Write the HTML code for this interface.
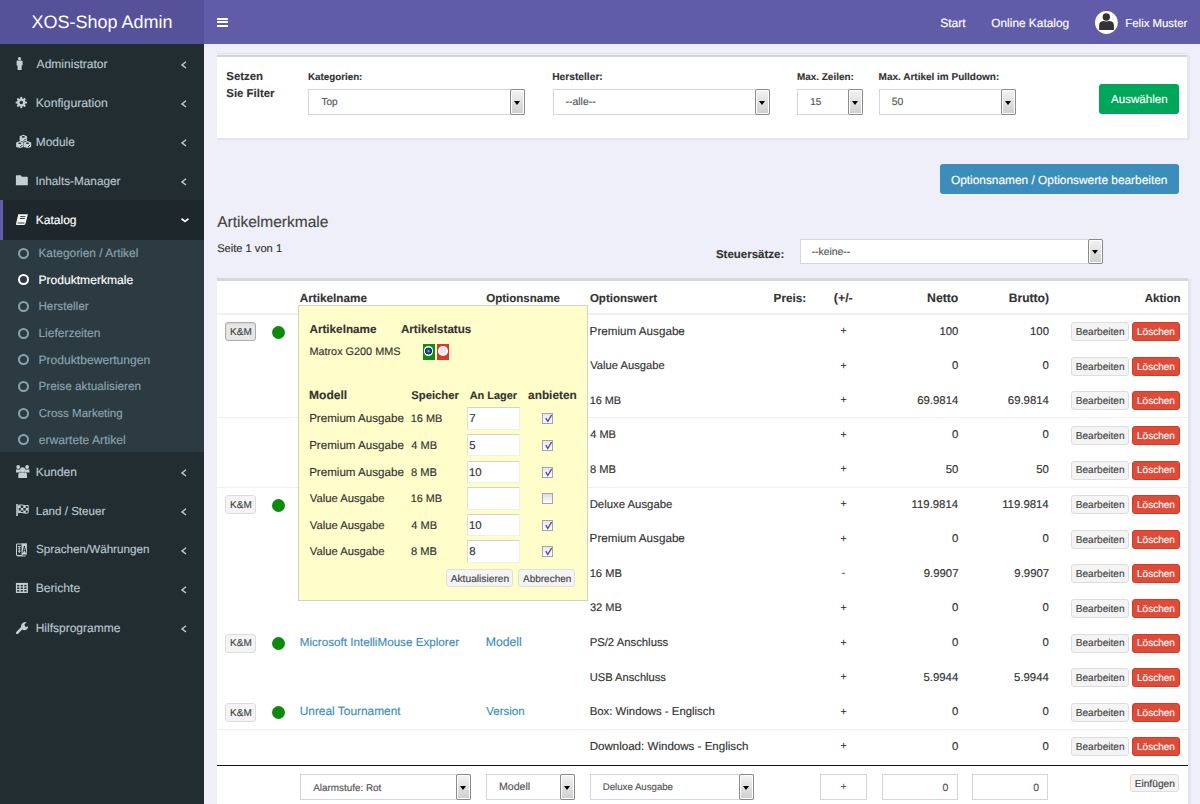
<!DOCTYPE html>
<html><head><meta charset="utf-8"><title>XOS-Shop Admin</title>
<style>
html,body{margin:0;padding:0;width:1200px;height:804px;overflow:hidden;}
body{position:relative;font-family:"Liberation Sans",sans-serif;text-rendering:geometricPrecision;}
.t{position:absolute;white-space:nowrap;-webkit-text-stroke:0.15px currentColor;}
.b{position:absolute;}
</style></head><body>
<div class="b" style="left:0px;top:0px;width:1200px;height:804px;background:#eeeff8;"></div>
<div class="b" style="left:0px;top:0px;width:204px;height:44px;background:#555299;"></div>
<div class="t" style="left:31.55px;top:13.00px;font-size:18.013px;line-height:18.013px;color:#fff;-webkit-text-stroke:0;">XOS-Shop Admin</div>
<div class="b" style="left:204px;top:0px;width:996px;height:44px;background:#605ca8;"></div>
<div class="b" style="left:217px;top:17.6px;width:11px;height:2.1999999999999993px;background:#fff;border-radius:0.5px;"></div>
<div class="b" style="left:217px;top:21px;width:11px;height:2.1999999999999993px;background:#fff;border-radius:0.5px;"></div>
<div class="b" style="left:217px;top:24.8px;width:11px;height:2.1999999999999993px;background:#fff;border-radius:0.5px;"></div>
<div class="t" style="left:940.20px;top:17.00px;font-size:12.049px;line-height:12.049px;color:#fff;">Start</div>
<div class="t" style="left:991.31px;top:18.00px;font-size:11.860px;line-height:11.860px;color:#fff;">Online Katalog</div>
<div class="t" style="left:1125.34px;top:19.00px;font-size:11.402px;line-height:11.402px;color:#fff;">Felix Muster</div>
<svg class="b" style="left:1095px;top:11px" width="23" height="23" viewBox="0 0 23 23"><circle cx="11.4" cy="11.5" r="11.4" fill="#fff"/><path d="M4.1 18.4 L4.1 14.6 Q4.1 10.4 8.3 10.1 L14.6 10.1 Q18.9 10.4 18.9 14.6 L18.9 18.4 Q18.9 19 18.3 19 L4.7 19 Q4.1 19 4.1 18.4 Z" fill="#333"/><circle cx="11.3" cy="6" r="4.6" fill="#fff"/><circle cx="11.3" cy="6" r="3.7" fill="#333"/></svg>
<div class="b" style="left:0px;top:44px;width:204px;height:760px;background:#222d32;"></div>
<div class="b" style="left:0px;top:200px;width:204px;height:40px;background:#1e282c;"></div>
<div class="b" style="left:0px;top:200px;width:3px;height:40px;background:#605ca8;"></div>
<div class="b" style="left:0px;top:240px;width:204px;height:212px;background:#2c3b41;"></div>
<div class="t" style="left:36.60px;top:58.00px;font-size:12.051px;line-height:12.051px;color:#b8c7ce;">Administrator</div>
<svg class="b" style="left:180px;top:58.5px" width="8" height="10" viewBox="0 0 8 10"><path d="M6 2.75 L2 5.9 L6 9" stroke="#b8c7ce" stroke-width="1.5" fill="none"/></svg>
<div class="t" style="left:35.68px;top:97.00px;font-size:12.261px;line-height:12.261px;color:#b8c7ce;">Konfiguration</div>
<svg class="b" style="left:180px;top:97.5px" width="8" height="10" viewBox="0 0 8 10"><path d="M6 2.75 L2 5.9 L6 9" stroke="#b8c7ce" stroke-width="1.5" fill="none"/></svg>
<div class="t" style="left:35.70px;top:137.00px;font-size:11.969px;line-height:11.969px;color:#b8c7ce;">Module</div>
<svg class="b" style="left:180px;top:136.5px" width="8" height="10" viewBox="0 0 8 10"><path d="M6 2.75 L2 5.9 L6 9" stroke="#b8c7ce" stroke-width="1.5" fill="none"/></svg>
<div class="t" style="left:35.42px;top:176.00px;font-size:11.789px;line-height:11.789px;color:#b8c7ce;">Inhalts-Manager</div>
<svg class="b" style="left:180px;top:175.5px" width="8" height="10" viewBox="0 0 8 10"><path d="M6 2.75 L2 5.9 L6 9" stroke="#b8c7ce" stroke-width="1.5" fill="none"/></svg>
<div class="t" style="left:35.70px;top:214.00px;font-size:12.062px;line-height:12.062px;color:#fff;">Katalog</div>
<svg class="b" style="left:180px;top:215.5px" width="10" height="8" viewBox="0 0 10 8"><path d="M1.5 2.75 L5 5.5 L8.5 2.75" stroke="#fff" stroke-width="1.6" fill="none"/></svg>
<div class="t" style="left:35.70px;top:467.00px;font-size:11.939px;line-height:11.939px;color:#b8c7ce;">Kunden</div>
<svg class="b" style="left:180px;top:466.5px" width="8" height="10" viewBox="0 0 8 10"><path d="M6 2.75 L2 5.9 L6 9" stroke="#b8c7ce" stroke-width="1.5" fill="none"/></svg>
<div class="t" style="left:35.73px;top:507.00px;font-size:11.593px;line-height:11.593px;color:#b8c7ce;">Land / Steuer</div>
<svg class="b" style="left:180px;top:505.5px" width="8" height="10" viewBox="0 0 8 10"><path d="M6 2.75 L2 5.9 L6 9" stroke="#b8c7ce" stroke-width="1.5" fill="none"/></svg>
<div class="t" style="left:36.02px;top:544.00px;font-size:11.668px;line-height:11.668px;color:#b8c7ce;">Sprachen/Währungen</div>
<svg class="b" style="left:180px;top:544.5px" width="8" height="10" viewBox="0 0 8 10"><path d="M6 2.75 L2 5.9 L6 9" stroke="#b8c7ce" stroke-width="1.5" fill="none"/></svg>
<div class="t" style="left:35.69px;top:582.00px;font-size:12.141px;line-height:12.141px;color:#b8c7ce;">Berichte</div>
<svg class="b" style="left:180px;top:583.5px" width="8" height="10" viewBox="0 0 8 10"><path d="M6 2.75 L2 5.9 L6 9" stroke="#b8c7ce" stroke-width="1.5" fill="none"/></svg>
<div class="t" style="left:35.70px;top:622.00px;font-size:12.014px;line-height:12.014px;color:#b8c7ce;">Hilfsprogramme</div>
<svg class="b" style="left:180px;top:622.5px" width="8" height="10" viewBox="0 0 8 10"><path d="M6 2.75 L2 5.9 L6 9" stroke="#b8c7ce" stroke-width="1.5" fill="none"/></svg>
<div class="t" style="left:38.41px;top:248.00px;font-size:11.927px;line-height:11.927px;color:#8aa4af;">Kategorien / Artikel</div>
<div class="b" style="left:18.3px;top:247.60px;width:7px;height:7px;border:2px solid #8aa4af;border-radius:50%"></div>
<div class="t" style="left:38.39px;top:274.00px;font-size:12.129px;line-height:12.129px;color:#fff;">Produktmerkmale</div>
<div class="b" style="left:18.3px;top:274.25px;width:7px;height:7px;border:2px solid #fff;border-radius:50%"></div>
<div class="t" style="left:38.42px;top:301.00px;font-size:11.737px;line-height:11.737px;color:#8aa4af;">Hersteller</div>
<div class="b" style="left:18.3px;top:300.90px;width:7px;height:7px;border:2px solid #8aa4af;border-radius:50%"></div>
<div class="t" style="left:38.40px;top:327.00px;font-size:12.000px;line-height:12.000px;color:#8aa4af;">Lieferzeiten</div>
<div class="b" style="left:18.3px;top:327.55px;width:7px;height:7px;border:2px solid #8aa4af;border-radius:50%"></div>
<div class="t" style="left:38.39px;top:354.00px;font-size:12.143px;line-height:12.143px;color:#8aa4af;">Produktbewertungen</div>
<div class="b" style="left:18.3px;top:354.20px;width:7px;height:7px;border:2px solid #8aa4af;border-radius:50%"></div>
<div class="t" style="left:38.42px;top:381.00px;font-size:11.778px;line-height:11.778px;color:#8aa4af;">Preise aktualisieren</div>
<div class="b" style="left:18.3px;top:380.85px;width:7px;height:7px;border:2px solid #8aa4af;border-radius:50%"></div>
<div class="t" style="left:38.72px;top:409.00px;font-size:11.540px;line-height:11.540px;color:#8aa4af;">Cross Marketing</div>
<div class="b" style="left:18.3px;top:407.50px;width:7px;height:7px;border:2px solid #8aa4af;border-radius:50%"></div>
<div class="t" style="left:38.69px;top:434.00px;font-size:12.156px;line-height:12.156px;color:#8aa4af;">erwartete Artikel</div>
<div class="b" style="left:18.3px;top:434.15px;width:7px;height:7px;border:2px solid #8aa4af;border-radius:50%"></div>
<svg class="b" style="left:0;top:0" width="204" height="804" viewBox="0 0 204 804"><circle cx="19.5" cy="58.6" r="1.6" fill="#c3cfd4"/><path d="M16.6 61.2 Q16.6 60.6 17.3 60.6 L21.9 60.6 Q22.6 60.6 22.6 61.2 L22.6 65.4 L21.6 65.4 L21.6 70 L17.6 70 L17.6 65.4 L16.6 65.4 Z" fill="#c3cfd4"/><rect x="20.3" y="96.9" width="2" height="3" fill="#c3cfd4" transform="rotate(0 21.3 102.5)"/><rect x="20.3" y="96.9" width="2" height="3" fill="#c3cfd4" transform="rotate(45 21.3 102.5)"/><rect x="20.3" y="96.9" width="2" height="3" fill="#c3cfd4" transform="rotate(90 21.3 102.5)"/><rect x="20.3" y="96.9" width="2" height="3" fill="#c3cfd4" transform="rotate(135 21.3 102.5)"/><rect x="20.3" y="96.9" width="2" height="3" fill="#c3cfd4" transform="rotate(180 21.3 102.5)"/><rect x="20.3" y="96.9" width="2" height="3" fill="#c3cfd4" transform="rotate(225 21.3 102.5)"/><rect x="20.3" y="96.9" width="2" height="3" fill="#c3cfd4" transform="rotate(270 21.3 102.5)"/><rect x="20.3" y="96.9" width="2" height="3" fill="#c3cfd4" transform="rotate(315 21.3 102.5)"/><circle cx="21.3" cy="102.5" r="4.1" fill="#c3cfd4"/><circle cx="21.3" cy="102.5" r="1.7" fill="#222d32"/><path d="M19.6 136.3 L23.3 134.8 L27.0 136.3 L27.0 140.70000000000002 L23.3 141.8 L19.6 140.70000000000002 Z" fill="#c3cfd4"/><ellipse cx="23.3" cy="136.9" rx="1.6" ry="0.8" fill="#222d32"/><path d="M24.0 140.5 L25.7 138.8" stroke="#222d32" stroke-width="1"/><path d="M16.1 142.6 L19.8 141.1 L23.5 142.6 L23.5 147.0 L19.8 148.1 L16.1 147.0 Z" fill="#c3cfd4"/><ellipse cx="19.8" cy="143.2" rx="1.6" ry="0.8" fill="#222d32"/><path d="M20.5 146.79999999999998 L22.2 145.1" stroke="#222d32" stroke-width="1"/><path d="M23.8 142.6 L27.5 141.1 L31.2 142.6 L31.2 147.0 L27.5 148.1 L23.8 147.0 Z" fill="#c3cfd4"/><ellipse cx="27.5" cy="143.2" rx="1.6" ry="0.8" fill="#222d32"/><path d="M28.2 146.79999999999998 L29.9 145.1" stroke="#222d32" stroke-width="1"/><path d="M15.9 176 Q15.9 175.3 16.6 175.3 L20.8 175.3 L21.8 176.8 L27.1 176.8 Q27.8 176.8 27.8 177.5 L27.8 185.2 L15.9 185.2 Z" fill="#c3cfd4"/><path d="M18.3 214.3 L27.9 214.3 L25.6 223.2 Q25.3 224.9 24 224.9 L16.4 224.9 Q15.9 224.9 16.1 223.6 Z" fill="#f4f6f6"/><path d="M20.2 216.6 L25.3 216.6 M19.8 218.5 L24.8 218.5 M17.6 223 L24.4 223" stroke="#222d32" stroke-width="0.9"/><circle cx="18.2" cy="467" r="1.9" fill="#c3cfd4"/><circle cx="27.1" cy="467" r="1.9" fill="#c3cfd4"/><path d="M16 469.5 L20.5 469.5 L20.5 472.5 L16 472.5 Z M24.7 469.5 L29.4 469.5 L29.4 472.5 L24.7 472.5 Z" fill="#c3cfd4"/><circle cx="22.6" cy="469.8" r="2.6" fill="#c3cfd4"/><path d="M18.3 474.5 Q18.3 472.5 20.3 472.5 L25 472.5 Q27 472.5 27 474.5 L27 477.9 L18.3 477.9 Z" fill="#c3cfd4"/><rect x="16.2" y="504" width="1.6" height="12" fill="#c3cfd4"/><path d="M18.3 505.3 Q20.8 504.3 23.2 505.3 Q25.7 506.3 28.2 505.3 L28.2 512.8 Q25.7 513.8 23.2 512.8 Q20.8 511.8 18.3 512.8 Z" fill="none" stroke="#c3cfd4" stroke-width="1"/><rect x="18.3" y="505.5" width="2.5" height="2.5" fill="#c3cfd4"/><rect x="23.2" y="505.5" width="2.5" height="2.5" fill="#c3cfd4"/><rect x="20.8" y="508" width="2.5" height="2.5" fill="#c3cfd4"/><rect x="25.7" y="508" width="2.5" height="2.5" fill="#c3cfd4"/><rect x="18.3" y="510.5" width="2.5" height="2.5" fill="#c3cfd4"/><rect x="23.2" y="510.5" width="2.5" height="2.5" fill="#c3cfd4"/><path d="M16.5 544 L22.2 544 L22.2 555.4 L16.5 555.4 Z" fill="none" stroke="#c3cfd4" stroke-width="1"/><path d="M17.8 546.5 h3 M18.2 548.8 h2.4 M17.8 551.2 h3 M19.3 546 v7" stroke="#c3cfd4" stroke-width="0.9"/><path d="M21.8 543.3 L26.9 543.3 L26.9 554.6 L21.8 554.6 Z" fill="#c3cfd4"/><path d="M22.9 552.6 L24.4 546 L25.9 552.6 M23.4 550.6 h2" stroke="#222d32" stroke-width="0.9" fill="none"/><path d="M17.3 556 h8.6" stroke="#c3cfd4" stroke-width="0.9"/><rect x="15.9" y="582.9" width="12" height="10.1" fill="#c3cfd4"/><rect x="17.1" y="584.9" width="2.2" height="1.5" fill="#222d32"/><rect x="17.1" y="587.5" width="2.2" height="1.5" fill="#222d32"/><rect x="17.1" y="590.1" width="2.2" height="1.5" fill="#222d32"/><rect x="20.7" y="584.9" width="2.2" height="1.5" fill="#222d32"/><rect x="20.7" y="587.5" width="2.2" height="1.5" fill="#222d32"/><rect x="20.7" y="590.1" width="2.2" height="1.5" fill="#222d32"/><rect x="24.3" y="584.9" width="2.2" height="1.5" fill="#222d32"/><rect x="24.3" y="587.5" width="2.2" height="1.5" fill="#222d32"/><rect x="24.3" y="590.1" width="2.2" height="1.5" fill="#222d32"/><path d="M17.2 632.8 L22.3 627.7" stroke="#c3cfd4" stroke-width="2.6" stroke-linecap="round"/><path d="M21.3 628.6 Q20.2 624.3 23.5 622.6 Q25.2 621.8 26.6 622.2 L24.4 624.4 L25.1 626.5 L27.2 627.1 L28.2 625.8 Q28.3 628.2 26.7 629.4 Q24.7 630.8 22.6 629.8 Z" fill="#c3cfd4"/></svg>
<div class="b" style="left:217px;top:53px;width:971px;height:1px;background:#e4e5ec;"></div>
<div class="b" style="left:1187px;top:55px;width:2.5px;height:84px;background:#e5e6ec;"></div>
<div class="b" style="left:217px;top:137.5px;width:972px;height:2.0px;background:#e5e6ec;"></div>
<div class="b" style="left:217px;top:55px;width:970px;height:83px;background:#fff;border-top:2px solid #d2d4da;box-sizing:border-box;"></div>
<div class="t" style="left:226.31px;top:72.00px;font-size:11.429px;line-height:11.429px;color:#333;font-weight:bold;-webkit-text-stroke:0.12px currentColor;">Setzen</div>
<div class="t" style="left:226.31px;top:89.00px;font-size:11.429px;line-height:11.429px;color:#333;font-weight:bold;-webkit-text-stroke:0.12px currentColor;">Sie Filter</div>
<div class="t" style="left:307.96px;top:73.00px;font-size:9.815px;line-height:9.815px;color:#333;font-weight:bold;-webkit-text-stroke:0.12px currentColor;">Kategorien:</div>
<div class="b" style="left:308px;top:89px;width:217px;height:26px;background:#fff;border:1px solid #d2d6de;box-sizing:border-box;"></div>
<div class="b" style="left:510px;top:89px;width:15px;height:26px;border:1px solid #8a8a8a;border-radius:2px;box-sizing:border-box;background:#fff;"><div style="position:absolute;left:1px;top:1px;right:1px;bottom:1px;background:linear-gradient(#f2f2f2,#d0d0d0)"></div><div style="position:absolute;left:3px;top:10.5px;width:0;height:0;border-left:3.5px solid transparent;border-right:3.5px solid transparent;border-top:4px solid #000"></div></div>
<div class="t" style="left:321.45px;top:98.00px;font-size:10.065px;line-height:10.065px;color:#555;">Top</div>
<div class="t" style="left:552.23px;top:73.00px;font-size:10.220px;line-height:10.220px;color:#333;font-weight:bold;-webkit-text-stroke:0.12px currentColor;">Hersteller:</div>
<div class="b" style="left:552.6px;top:89px;width:217.39999999999998px;height:26px;background:#fff;border:1px solid #d2d6de;box-sizing:border-box;"></div>
<div class="b" style="left:755px;top:89px;width:15px;height:26px;border:1px solid #8a8a8a;border-radius:2px;box-sizing:border-box;background:#fff;"><div style="position:absolute;left:1px;top:1px;right:1px;bottom:1px;background:linear-gradient(#f2f2f2,#d0d0d0)"></div><div style="position:absolute;left:3px;top:10.5px;width:0;height:0;border-left:3.5px solid transparent;border-right:3.5px solid transparent;border-top:4px solid #000"></div></div>
<div class="t" style="left:565.48px;top:98.00px;font-size:10.464px;line-height:10.464px;color:#555;">--alle--</div>
<div class="t" style="left:797.06px;top:73.00px;font-size:9.910px;line-height:9.910px;color:#333;font-weight:bold;-webkit-text-stroke:0.12px currentColor;">Max. Zeilen:</div>
<div class="b" style="left:797px;top:89px;width:66px;height:26px;background:#fff;border:1px solid #d2d6de;box-sizing:border-box;"></div>
<div class="b" style="left:848px;top:89px;width:15px;height:26px;border:1px solid #8a8a8a;border-radius:2px;box-sizing:border-box;background:#fff;"><div style="position:absolute;left:1px;top:1px;right:1px;bottom:1px;background:linear-gradient(#f2f2f2,#d0d0d0)"></div><div style="position:absolute;left:3px;top:10.5px;width:0;height:0;border-left:3.5px solid transparent;border-right:3.5px solid transparent;border-top:4px solid #000"></div></div>
<div class="t" style="left:810.25px;top:98.00px;font-size:10.000px;line-height:10.000px;color:#555;">15</div>
<div class="t" style="left:878.55px;top:73.00px;font-size:10.000px;line-height:10.000px;color:#333;font-weight:bold;-webkit-text-stroke:0.12px currentColor;">Max. Artikel im Pulldown:</div>
<div class="b" style="left:879px;top:89px;width:137px;height:26px;background:#fff;border:1px solid #d2d6de;box-sizing:border-box;"></div>
<div class="b" style="left:1001px;top:89px;width:15px;height:26px;border:1px solid #8a8a8a;border-radius:2px;box-sizing:border-box;background:#fff;"><div style="position:absolute;left:1px;top:1px;right:1px;bottom:1px;background:linear-gradient(#f2f2f2,#d0d0d0)"></div><div style="position:absolute;left:3px;top:10.5px;width:0;height:0;border-left:3.5px solid transparent;border-right:3.5px solid transparent;border-top:4px solid #000"></div></div>
<div class="t" style="left:891.78px;top:98.00px;font-size:10.439px;line-height:10.439px;color:#555;">50</div>
<div class="b" style="left:1099px;top:84px;width:80px;height:30px;background:#00a65a;border-radius:3px;"></div>
<div class="t" style="left:1111.00px;top:94.00px;font-size:11.606px;line-height:11.606px;color:#fff;">Auswählen</div>
<div class="b" style="left:940px;top:164px;width:239px;height:30px;background:#3c8dbc;border-radius:3px;"></div>
<div class="t" style="left:950.91px;top:175.00px;font-size:11.884px;line-height:11.884px;color:#fff;">Optionsnamen / Optionswerte bearbeiten</div>
<div class="t" style="left:217.20px;top:215.00px;font-size:15.523px;line-height:15.523px;color:#444;">Artikelmerkmale</div>
<div class="t" style="left:217.14px;top:244.00px;font-size:11.130px;line-height:11.130px;color:#333;">Seite 1 von 1</div>
<div class="t" style="left:715.91px;top:250.00px;font-size:11.502px;line-height:11.502px;color:#333;font-weight:bold;-webkit-text-stroke:0.12px currentColor;">Steuersätze:</div>
<div class="b" style="left:799.7px;top:238.7px;width:303.29999999999995px;height:25.5px;background:#fff;border:1px solid #d2d6de;box-sizing:border-box;"></div>
<div class="b" style="left:1088px;top:238.7px;width:15px;height:25.5px;border:1px solid #8a8a8a;border-radius:2px;box-sizing:border-box;background:#fff;"><div style="position:absolute;left:1px;top:1px;right:1px;bottom:1px;background:linear-gradient(#f2f2f2,#d0d0d0)"></div><div style="position:absolute;left:3px;top:10.2px;width:0;height:0;border-left:3.5px solid transparent;border-right:3.5px solid transparent;border-top:4px solid #000"></div></div>
<div class="t" style="left:811.68px;top:248.00px;font-size:10.345px;line-height:10.345px;color:#555;">--keine--</div>
<div class="b" style="left:1188px;top:279px;width:2.5px;height:525px;background:#e5e6ec;"></div>
<div class="b" style="left:217px;top:278px;width:971px;height:526px;background:#fff;border-top:3px solid #d2d6de;box-sizing:border-box;"></div>
<div class="t" style="left:299.71px;top:293.00px;font-size:11.762px;line-height:11.762px;color:#333;font-weight:bold;-webkit-text-stroke:0.12px currentColor;">Artikelname</div>
<div class="t" style="left:486.17px;top:294.00px;font-size:11.548px;line-height:11.548px;color:#333;font-weight:bold;-webkit-text-stroke:0.12px currentColor;">Optionsname</div>
<div class="t" style="left:589.92px;top:294.00px;font-size:11.515px;line-height:11.515px;color:#333;font-weight:bold;-webkit-text-stroke:0.12px currentColor;">Optionswert</div>
<div class="t" style="left:773.62px;top:293.00px;font-size:11.731px;line-height:11.731px;color:#333;font-weight:bold;-webkit-text-stroke:0.12px currentColor;">Preis:</div>
<div class="t" style="left:833.78px;top:292.00px;font-size:12.414px;line-height:12.414px;color:#333;font-weight:bold;-webkit-text-stroke:0.12px currentColor;">(+/-</div>
<div class="t" style="left:927.08px;top:292.00px;font-size:12.245px;line-height:12.245px;color:#333;font-weight:bold;-webkit-text-stroke:0.12px currentColor;">Netto</div>
<div class="t" style="left:1008.69px;top:292.00px;font-size:12.125px;line-height:12.125px;color:#333;font-weight:bold;-webkit-text-stroke:0.12px currentColor;">Brutto)</div>
<div class="t" style="left:1144.71px;top:294.00px;font-size:11.570px;line-height:11.570px;color:#333;font-weight:bold;-webkit-text-stroke:0.12px currentColor;">Aktion</div>
<div class="b" style="left:217px;top:313px;width:971px;height:1.5px;background:#f1f1f1;"></div>
<div class="t" style="left:589.62px;top:326.00px;font-size:11.677px;line-height:11.677px;color:#333;">Premium Ausgabe</div>
<div class="t" style="left:840.58px;top:326.00px;font-size:10.500px;line-height:10.500px;color:#333;">+</div>
<div class="t" style="left:939.41px;top:327.00px;font-size:11.376px;line-height:11.376px;color:#333;">100</div>
<div class="t" style="left:1030.01px;top:327.00px;font-size:11.376px;line-height:11.376px;color:#333;">100</div>
<div class="b" style="left:1071px;top:322.2px;width:58px;height:19.0px;background:#f4f4f4;border:1px solid #ddd;border-radius:3px;box-sizing:border-box;"></div>
<div class="t" style="left:1075.74px;top:328.00px;font-size:10.106px;line-height:10.106px;color:#444;">Bearbeiten</div>
<div class="b" style="left:1132px;top:322.2px;width:47.5px;height:19.0px;background:#dd4b39;border:1px solid #d73925;border-radius:3px;box-sizing:border-box;"></div>
<div class="t" style="left:1137.05px;top:328.00px;font-size:10.000px;line-height:10.000px;color:#fff;">Löschen</div>
<div class="t" style="left:590.22px;top:361.00px;font-size:11.197px;line-height:11.197px;color:#333;">Value Ausgabe</div>
<div class="t" style="left:840.58px;top:361.00px;font-size:10.500px;line-height:10.500px;color:#333;">+</div>
<div class="t" style="left:951.93px;top:361.00px;font-size:11.376px;line-height:11.376px;color:#333;">0</div>
<div class="t" style="left:1042.53px;top:361.00px;font-size:11.376px;line-height:11.376px;color:#333;">0</div>
<div class="b" style="left:1071px;top:356.8px;width:58px;height:19.0px;background:#f4f4f4;border:1px solid #ddd;border-radius:3px;box-sizing:border-box;"></div>
<div class="t" style="left:1075.74px;top:363.00px;font-size:10.106px;line-height:10.106px;color:#444;">Bearbeiten</div>
<div class="b" style="left:1132px;top:356.8px;width:47.5px;height:19.0px;background:#dd4b39;border:1px solid #d73925;border-radius:3px;box-sizing:border-box;"></div>
<div class="t" style="left:1137.05px;top:363.00px;font-size:10.000px;line-height:10.000px;color:#fff;">Löschen</div>
<div class="t" style="left:589.68px;top:396.00px;font-size:10.883px;line-height:10.883px;color:#333;">16 MB</div>
<div class="t" style="left:840.58px;top:395.00px;font-size:10.500px;line-height:10.500px;color:#333;">+</div>
<div class="t" style="left:917.23px;top:396.00px;font-size:11.376px;line-height:11.376px;color:#333;">69.9814</div>
<div class="t" style="left:1007.83px;top:396.00px;font-size:11.376px;line-height:11.376px;color:#333;">69.9814</div>
<div class="b" style="left:1071px;top:391.4px;width:58px;height:19.0px;background:#f4f4f4;border:1px solid #ddd;border-radius:3px;box-sizing:border-box;"></div>
<div class="t" style="left:1075.74px;top:397.00px;font-size:10.106px;line-height:10.106px;color:#444;">Bearbeiten</div>
<div class="b" style="left:1132px;top:391.4px;width:47.5px;height:19.0px;background:#dd4b39;border:1px solid #d73925;border-radius:3px;box-sizing:border-box;"></div>
<div class="t" style="left:1137.05px;top:397.00px;font-size:10.000px;line-height:10.000px;color:#fff;">Löschen</div>
<div class="b" style="left:217px;top:417.3px;width:971px;height:1.0px;background:#efefef;"></div>
<div class="t" style="left:590.22px;top:430.00px;font-size:11.022px;line-height:11.022px;color:#333;">4 MB</div>
<div class="t" style="left:840.58px;top:430.00px;font-size:10.500px;line-height:10.500px;color:#333;">+</div>
<div class="t" style="left:951.93px;top:430.00px;font-size:11.376px;line-height:11.376px;color:#333;">0</div>
<div class="t" style="left:1042.53px;top:430.00px;font-size:11.376px;line-height:11.376px;color:#333;">0</div>
<div class="b" style="left:1071px;top:426.0px;width:58px;height:19.0px;background:#f4f4f4;border:1px solid #ddd;border-radius:3px;box-sizing:border-box;"></div>
<div class="t" style="left:1075.74px;top:432.00px;font-size:10.106px;line-height:10.106px;color:#444;">Bearbeiten</div>
<div class="b" style="left:1132px;top:426.0px;width:47.5px;height:19.0px;background:#dd4b39;border:1px solid #d73925;border-radius:3px;box-sizing:border-box;"></div>
<div class="t" style="left:1137.05px;top:432.00px;font-size:10.000px;line-height:10.000px;color:#fff;">Löschen</div>
<div class="t" style="left:589.94px;top:465.00px;font-size:11.146px;line-height:11.146px;color:#333;">8 MB</div>
<div class="t" style="left:840.58px;top:464.00px;font-size:10.500px;line-height:10.500px;color:#333;">+</div>
<div class="t" style="left:945.67px;top:465.00px;font-size:11.376px;line-height:11.376px;color:#333;">50</div>
<div class="t" style="left:1036.27px;top:465.00px;font-size:11.376px;line-height:11.376px;color:#333;">50</div>
<div class="b" style="left:1071px;top:460.59999999999997px;width:58px;height:19.0px;background:#f4f4f4;border:1px solid #ddd;border-radius:3px;box-sizing:border-box;"></div>
<div class="t" style="left:1075.74px;top:466.00px;font-size:10.106px;line-height:10.106px;color:#444;">Bearbeiten</div>
<div class="b" style="left:1132px;top:460.59999999999997px;width:47.5px;height:19.0px;background:#dd4b39;border:1px solid #d73925;border-radius:3px;box-sizing:border-box;"></div>
<div class="t" style="left:1137.05px;top:466.00px;font-size:10.000px;line-height:10.000px;color:#fff;">Löschen</div>
<div class="b" style="left:217px;top:486.5px;width:971px;height:1.0px;background:#efefef;"></div>
<div class="t" style="left:589.65px;top:500.00px;font-size:11.373px;line-height:11.373px;color:#333;">Deluxe Ausgabe</div>
<div class="t" style="left:840.58px;top:499.00px;font-size:10.500px;line-height:10.500px;color:#333;">+</div>
<div class="t" style="left:911.54px;top:500.00px;font-size:11.376px;line-height:11.376px;color:#333;">119.9814</div>
<div class="t" style="left:1002.14px;top:500.00px;font-size:11.376px;line-height:11.376px;color:#333;">119.9814</div>
<div class="b" style="left:1071px;top:495.2px;width:58px;height:19.000000000000057px;background:#f4f4f4;border:1px solid #ddd;border-radius:3px;box-sizing:border-box;"></div>
<div class="t" style="left:1075.74px;top:501.00px;font-size:10.106px;line-height:10.106px;color:#444;">Bearbeiten</div>
<div class="b" style="left:1132px;top:495.2px;width:47.5px;height:19.000000000000057px;background:#dd4b39;border:1px solid #d73925;border-radius:3px;box-sizing:border-box;"></div>
<div class="t" style="left:1137.05px;top:501.00px;font-size:10.000px;line-height:10.000px;color:#fff;">Löschen</div>
<div class="t" style="left:589.62px;top:533.00px;font-size:11.677px;line-height:11.677px;color:#333;">Premium Ausgabe</div>
<div class="t" style="left:840.58px;top:534.00px;font-size:10.500px;line-height:10.500px;color:#333;">+</div>
<div class="t" style="left:951.93px;top:534.00px;font-size:11.376px;line-height:11.376px;color:#333;">0</div>
<div class="t" style="left:1042.53px;top:534.00px;font-size:11.376px;line-height:11.376px;color:#333;">0</div>
<div class="b" style="left:1071px;top:529.8000000000001px;width:58px;height:19.0px;background:#f4f4f4;border:1px solid #ddd;border-radius:3px;box-sizing:border-box;"></div>
<div class="t" style="left:1075.74px;top:536.00px;font-size:10.106px;line-height:10.106px;color:#444;">Bearbeiten</div>
<div class="b" style="left:1132px;top:529.8000000000001px;width:47.5px;height:19.0px;background:#dd4b39;border:1px solid #d73925;border-radius:3px;box-sizing:border-box;"></div>
<div class="t" style="left:1137.05px;top:536.00px;font-size:10.000px;line-height:10.000px;color:#fff;">Löschen</div>
<div class="t" style="left:589.66px;top:569.00px;font-size:11.171px;line-height:11.171px;color:#333;">16 MB</div>
<div class="t" style="left:841.76px;top:568.00px;font-size:10.500px;line-height:10.500px;color:#333;">-</div>
<div class="t" style="left:923.77px;top:569.00px;font-size:11.376px;line-height:11.376px;color:#333;">9.9907</div>
<div class="t" style="left:1014.37px;top:569.00px;font-size:11.376px;line-height:11.376px;color:#333;">9.9907</div>
<div class="b" style="left:1071px;top:564.4000000000001px;width:58px;height:19.0px;background:#f4f4f4;border:1px solid #ddd;border-radius:3px;box-sizing:border-box;"></div>
<div class="t" style="left:1075.74px;top:570.00px;font-size:10.106px;line-height:10.106px;color:#444;">Bearbeiten</div>
<div class="b" style="left:1132px;top:564.4000000000001px;width:47.5px;height:19.0px;background:#dd4b39;border:1px solid #d73925;border-radius:3px;box-sizing:border-box;"></div>
<div class="t" style="left:1137.05px;top:570.00px;font-size:10.000px;line-height:10.000px;color:#fff;">Löschen</div>
<div class="t" style="left:589.95px;top:603.00px;font-size:11.071px;line-height:11.071px;color:#333;">32 MB</div>
<div class="t" style="left:840.58px;top:603.00px;font-size:10.500px;line-height:10.500px;color:#333;">+</div>
<div class="t" style="left:951.93px;top:603.00px;font-size:11.376px;line-height:11.376px;color:#333;">0</div>
<div class="t" style="left:1042.53px;top:603.00px;font-size:11.376px;line-height:11.376px;color:#333;">0</div>
<div class="b" style="left:1071px;top:599.0px;width:58px;height:19.0px;background:#f4f4f4;border:1px solid #ddd;border-radius:3px;box-sizing:border-box;"></div>
<div class="t" style="left:1075.74px;top:605.00px;font-size:10.106px;line-height:10.106px;color:#444;">Bearbeiten</div>
<div class="b" style="left:1132px;top:599.0px;width:47.5px;height:19.0px;background:#dd4b39;border:1px solid #d73925;border-radius:3px;box-sizing:border-box;"></div>
<div class="t" style="left:1137.05px;top:605.00px;font-size:10.000px;line-height:10.000px;color:#fff;">Löschen</div>
<div class="t" style="left:589.65px;top:638.00px;font-size:11.328px;line-height:11.328px;color:#333;">PS/2 Anschluss</div>
<div class="t" style="left:840.58px;top:638.00px;font-size:10.500px;line-height:10.500px;color:#333;">+</div>
<div class="t" style="left:951.93px;top:638.00px;font-size:11.376px;line-height:11.376px;color:#333;">0</div>
<div class="t" style="left:1042.53px;top:638.00px;font-size:11.376px;line-height:11.376px;color:#333;">0</div>
<div class="b" style="left:1071px;top:633.6000000000001px;width:58px;height:19.0px;background:#f4f4f4;border:1px solid #ddd;border-radius:3px;box-sizing:border-box;"></div>
<div class="t" style="left:1075.74px;top:639.00px;font-size:10.106px;line-height:10.106px;color:#444;">Bearbeiten</div>
<div class="b" style="left:1132px;top:633.6000000000001px;width:47.5px;height:19.0px;background:#dd4b39;border:1px solid #d73925;border-radius:3px;box-sizing:border-box;"></div>
<div class="t" style="left:1137.05px;top:639.00px;font-size:10.000px;line-height:10.000px;color:#fff;">Löschen</div>
<div class="t" style="left:589.66px;top:673.00px;font-size:11.167px;line-height:11.167px;color:#333;">USB Anschluss</div>
<div class="t" style="left:840.58px;top:672.00px;font-size:10.500px;line-height:10.500px;color:#333;">+</div>
<div class="t" style="left:923.49px;top:673.00px;font-size:11.376px;line-height:11.376px;color:#333;">5.9944</div>
<div class="t" style="left:1014.09px;top:673.00px;font-size:11.376px;line-height:11.376px;color:#333;">5.9944</div>
<div class="b" style="left:1071px;top:668.2px;width:58px;height:19.0px;background:#f4f4f4;border:1px solid #ddd;border-radius:3px;box-sizing:border-box;"></div>
<div class="t" style="left:1075.74px;top:674.00px;font-size:10.106px;line-height:10.106px;color:#444;">Bearbeiten</div>
<div class="b" style="left:1132px;top:668.2px;width:47.5px;height:19.0px;background:#dd4b39;border:1px solid #d73925;border-radius:3px;box-sizing:border-box;"></div>
<div class="t" style="left:1137.05px;top:674.00px;font-size:10.000px;line-height:10.000px;color:#fff;">Löschen</div>
<div class="t" style="left:589.65px;top:707.00px;font-size:11.384px;line-height:11.384px;color:#333;">Box: Windows - Englisch</div>
<div class="t" style="left:840.58px;top:707.00px;font-size:10.500px;line-height:10.500px;color:#333;">+</div>
<div class="t" style="left:951.93px;top:707.00px;font-size:11.376px;line-height:11.376px;color:#333;">0</div>
<div class="t" style="left:1042.53px;top:707.00px;font-size:11.376px;line-height:11.376px;color:#333;">0</div>
<div class="b" style="left:1071px;top:702.8000000000001px;width:58px;height:19.0px;background:#f4f4f4;border:1px solid #ddd;border-radius:3px;box-sizing:border-box;"></div>
<div class="t" style="left:1075.74px;top:709.00px;font-size:10.106px;line-height:10.106px;color:#444;">Bearbeiten</div>
<div class="b" style="left:1132px;top:702.8000000000001px;width:47.5px;height:19.0px;background:#dd4b39;border:1px solid #d73925;border-radius:3px;box-sizing:border-box;"></div>
<div class="t" style="left:1137.05px;top:709.00px;font-size:10.000px;line-height:10.000px;color:#fff;">Löschen</div>
<div class="b" style="left:217px;top:728.7px;width:971px;height:1.0px;background:#efefef;"></div>
<div class="t" style="left:589.63px;top:742.00px;font-size:11.574px;line-height:11.574px;color:#333;">Download: Windows - Englisch</div>
<div class="t" style="left:840.58px;top:741.00px;font-size:10.500px;line-height:10.500px;color:#333;">+</div>
<div class="t" style="left:951.93px;top:742.00px;font-size:11.376px;line-height:11.376px;color:#333;">0</div>
<div class="t" style="left:1042.53px;top:742.00px;font-size:11.376px;line-height:11.376px;color:#333;">0</div>
<div class="b" style="left:1071px;top:737.4000000000001px;width:58px;height:19.0px;background:#f4f4f4;border:1px solid #ddd;border-radius:3px;box-sizing:border-box;"></div>
<div class="t" style="left:1075.74px;top:743.00px;font-size:10.106px;line-height:10.106px;color:#444;">Bearbeiten</div>
<div class="b" style="left:1132px;top:737.4000000000001px;width:47.5px;height:19.0px;background:#dd4b39;border:1px solid #d73925;border-radius:3px;box-sizing:border-box;"></div>
<div class="t" style="left:1137.05px;top:743.00px;font-size:10.000px;line-height:10.000px;color:#fff;">Löschen</div>
<div class="b" style="left:225.3px;top:322.2px;width:30.69999999999999px;height:19.0px;background:#e8e8e8;border:1px solid #adadad;border-radius:3px;box-sizing:border-box;box-shadow:inset 0 1px 2px rgba(0,0,0,.1)"></div>
<div class="t" style="left:230.05px;top:328.00px;font-size:10.000px;line-height:10.000px;color:#444;">K&amp;M</div>
<div class="b" style="left:271.8px;top:325.7px;width:13.199999999999989px;height:13.199999999999989px;background:#0c8a0c;border-radius:50%;"></div>
<div class="b" style="left:225.3px;top:495.2px;width:30.69999999999999px;height:19.000000000000057px;background:#f4f4f4;border:1px solid #ddd;border-radius:3px;box-sizing:border-box;"></div>
<div class="t" style="left:230.05px;top:501.00px;font-size:10.000px;line-height:10.000px;color:#444;">K&amp;M</div>
<div class="b" style="left:271.8px;top:498.7px;width:13.199999999999989px;height:13.199999999999989px;background:#0c8a0c;border-radius:50%;"></div>
<div class="b" style="left:225.3px;top:633.6000000000001px;width:30.69999999999999px;height:19.0px;background:#f4f4f4;border:1px solid #ddd;border-radius:3px;box-sizing:border-box;"></div>
<div class="t" style="left:230.05px;top:639.00px;font-size:10.000px;line-height:10.000px;color:#444;">K&amp;M</div>
<div class="b" style="left:271.8px;top:637.1000000000001px;width:13.199999999999989px;height:13.199999999999932px;background:#0c8a0c;border-radius:50%;"></div>
<div class="t" style="left:299.72px;top:637.00px;font-size:11.669px;line-height:11.669px;color:#3c8dbc;">Microsoft IntelliMouse Explorer</div>
<div class="t" style="left:485.68px;top:636.00px;font-size:12.286px;line-height:12.286px;color:#3c8dbc;">Modell</div>
<div class="b" style="left:225.3px;top:702.8000000000001px;width:30.69999999999999px;height:19.0px;background:#f4f4f4;border:1px solid #ddd;border-radius:3px;box-sizing:border-box;"></div>
<div class="t" style="left:230.05px;top:709.00px;font-size:10.000px;line-height:10.000px;color:#444;">K&amp;M</div>
<div class="b" style="left:271.8px;top:706.3000000000001px;width:13.199999999999989px;height:13.199999999999932px;background:#0c8a0c;border-radius:50%;"></div>
<div class="t" style="left:299.71px;top:706.00px;font-size:11.905px;line-height:11.905px;color:#3c8dbc;">Unreal Tournament</div>
<div class="t" style="left:486.31px;top:707.00px;font-size:11.508px;line-height:11.508px;color:#3c8dbc;">Version</div>
<div class="b" style="left:217px;top:764.8px;width:971px;height:1.2000000000000455px;background:#111;"></div>
<div class="b" style="left:300px;top:774px;width:171px;height:26px;background:#fff;border:1px solid #d2d6de;box-sizing:border-box;"></div>
<div class="b" style="left:456px;top:774px;width:15px;height:26px;border:1px solid #8a8a8a;border-radius:2px;box-sizing:border-box;background:#fff;"><div style="position:absolute;left:1px;top:1px;right:1px;bottom:1px;background:linear-gradient(#f2f2f2,#d0d0d0)"></div><div style="position:absolute;left:3px;top:10.5px;width:0;height:0;border-left:3.5px solid transparent;border-right:3.5px solid transparent;border-top:4px solid #000"></div></div>
<div class="t" style="left:313.20px;top:784.00px;font-size:9.905px;line-height:9.905px;color:#555;">Alarmstufe: Rot</div>
<div class="b" style="left:486px;top:774px;width:89px;height:26px;background:#fff;border:1px solid #d2d6de;box-sizing:border-box;"></div>
<div class="b" style="left:560px;top:774px;width:15px;height:26px;border:1px solid #8a8a8a;border-radius:2px;box-sizing:border-box;background:#fff;"><div style="position:absolute;left:1px;top:1px;right:1px;bottom:1px;background:linear-gradient(#f2f2f2,#d0d0d0)"></div><div style="position:absolute;left:3px;top:10.5px;width:0;height:0;border-left:3.5px solid transparent;border-right:3.5px solid transparent;border-top:4px solid #000"></div></div>
<div class="t" style="left:498.90px;top:782.00px;font-size:10.643px;line-height:10.643px;color:#555;">Modell</div>
<div class="b" style="left:590px;top:774px;width:164px;height:26px;background:#fff;border:1px solid #d2d6de;box-sizing:border-box;"></div>
<div class="b" style="left:739px;top:774px;width:15px;height:26px;border:1px solid #8a8a8a;border-radius:2px;box-sizing:border-box;background:#fff;"><div style="position:absolute;left:1px;top:1px;right:1px;bottom:1px;background:linear-gradient(#f2f2f2,#d0d0d0)"></div><div style="position:absolute;left:3px;top:10.5px;width:0;height:0;border-left:3.5px solid transparent;border-right:3.5px solid transparent;border-top:4px solid #000"></div></div>
<div class="t" style="left:602.78px;top:783.00px;font-size:9.659px;line-height:9.659px;color:#555;">Deluxe Ausgabe</div>
<div class="b" style="left:819.7px;top:774px;width:47.799999999999955px;height:26px;background:#fff;border:1px solid #d2d6de;box-sizing:border-box;"></div>
<div class="t" style="left:840.48px;top:782.00px;font-size:10.500px;line-height:10.500px;color:#555;">+</div>
<div class="b" style="left:881.5px;top:774px;width:76.5px;height:26px;background:#fff;border:1px solid #d2d6de;box-sizing:border-box;"></div>
<div class="t" style="left:942.59px;top:783.00px;font-size:10.500px;line-height:10.500px;color:#555;">0</div>
<div class="b" style="left:971.8px;top:774px;width:76.40000000000009px;height:26px;background:#fff;border:1px solid #d2d6de;box-sizing:border-box;"></div>
<div class="t" style="left:1033.29px;top:783.00px;font-size:10.500px;line-height:10.500px;color:#555;">0</div>
<div class="b" style="left:1130px;top:774.3px;width:49px;height:18.200000000000045px;background:#f4f4f4;border:1px solid #ddd;border-radius:3px;box-sizing:border-box;"></div>
<div class="t" style="left:1134.63px;top:780.00px;font-size:10.211px;line-height:10.211px;color:#444;">Einfügen</div>
<div class="b" style="left:298px;top:305.3px;width:290px;height:295.7px;background:#fffdc9;border:1px solid #d3d3c3;box-sizing:border-box;"></div>
<div class="t" style="left:309.46px;top:324.00px;font-size:11.718px;line-height:11.718px;color:#333;font-weight:bold;-webkit-text-stroke:0.12px currentColor;">Artikelname</div>
<div class="t" style="left:400.96px;top:324.00px;font-size:11.625px;line-height:11.625px;color:#333;font-weight:bold;-webkit-text-stroke:0.12px currentColor;">Artikelstatus</div>
<div class="t" style="left:309.38px;top:347.00px;font-size:10.876px;line-height:10.876px;color:#333;">Matrox G200 MMS</div>
<div class="b" style="left:423px;top:344px;width:12px;height:15.5px;background:#148c14"><div style="position:absolute;left:0.8px;top:2.4px;width:9.6px;height:9.6px;border-radius:50%;background:radial-gradient(circle at 50% 50%,#8fd0f0 0,#2a6ab0 1.2px,#15306e 2.6px,#1c2f6a 3.3px,#f4f8f8 3.7px,#fff 4.8px)"></div></div>
<div class="b" style="left:437px;top:344px;width:12px;height:15.5px;background:#e0332a"><div style="position:absolute;left:1px;top:2.4px;width:9.6px;height:9.6px;border-radius:50%;background:radial-gradient(circle at 50% 45%,#e8e0ea 0,#e6e6ea 2.5px,#f4f4f4 3.6px,#fff 4.8px)"></div></div>
<div class="t" style="left:309.10px;top:389.00px;font-size:12.033px;line-height:12.033px;color:#333;font-weight:bold;-webkit-text-stroke:0.12px currentColor;">Modell</div>
<div class="t" style="left:411.32px;top:391.00px;font-size:11.286px;line-height:11.286px;color:#333;font-weight:bold;-webkit-text-stroke:0.12px currentColor;">Speicher</div>
<div class="t" style="left:469.63px;top:391.00px;font-size:10.953px;line-height:10.953px;color:#333;font-weight:bold;-webkit-text-stroke:0.12px currentColor;">An Lager</div>
<div class="t" style="left:528.10px;top:390.00px;font-size:11.826px;line-height:11.826px;color:#333;font-weight:bold;-webkit-text-stroke:0.12px currentColor;">anbieten</div>
<div class="t" style="left:309.13px;top:413.00px;font-size:11.602px;line-height:11.602px;color:#333;">Premium Ausgabe</div>
<div class="t" style="left:410.78px;top:414.00px;font-size:10.955px;line-height:10.955px;color:#333;">16 MB</div>
<div class="b" style="left:467px;top:407.3px;width:53px;height:22.5px;background:#fff;border:1px solid #f0f0e8;border-top-color:#d4d4cc;border-left-color:#e0e0d8;box-sizing:border-box;"></div>
<div class="t" style="left:469.23px;top:414.00px;font-size:11.400px;line-height:11.400px;color:#333;">7</div>
<div class="b" style="left:542px;top:413.3px;width:11px;height:11px;border:1px solid #a4a4b0;box-sizing:border-box;background:linear-gradient(#e6e6ee,#fff)"><svg style="position:absolute;left:1px;top:0px" width="9" height="9" viewBox="0 0 9 9"><path d="M1.8 4.2 L3.8 7.5 L7.6 1" stroke="#4a4aa8" stroke-width="1.4" fill="none"/></svg></div>
<div class="t" style="left:309.13px;top:440.00px;font-size:11.602px;line-height:11.602px;color:#333;">Premium Ausgabe</div>
<div class="t" style="left:411.33px;top:441.00px;font-size:11.000px;line-height:11.000px;color:#333;">4 MB</div>
<div class="b" style="left:467px;top:433.90000000000003px;width:53px;height:22.5px;background:#fff;border:1px solid #f0f0e8;border-top-color:#d4d4cc;border-left-color:#e0e0d8;box-sizing:border-box;"></div>
<div class="t" style="left:469.23px;top:441.00px;font-size:11.400px;line-height:11.400px;color:#333;">5</div>
<div class="b" style="left:542px;top:439.9px;width:11px;height:11px;border:1px solid #a4a4b0;box-sizing:border-box;background:linear-gradient(#e6e6ee,#fff)"><svg style="position:absolute;left:1px;top:0px" width="9" height="9" viewBox="0 0 9 9"><path d="M1.8 4.2 L3.8 7.5 L7.6 1" stroke="#4a4aa8" stroke-width="1.4" fill="none"/></svg></div>
<div class="t" style="left:309.13px;top:467.00px;font-size:11.602px;line-height:11.602px;color:#333;">Premium Ausgabe</div>
<div class="t" style="left:411.04px;top:468.00px;font-size:11.124px;line-height:11.124px;color:#333;">8 MB</div>
<div class="b" style="left:467px;top:460.5px;width:53px;height:22.5px;background:#fff;border:1px solid #f0f0e8;border-top-color:#d4d4cc;border-left-color:#e0e0d8;box-sizing:border-box;"></div>
<div class="t" style="left:468.94px;top:468.00px;font-size:11.400px;line-height:11.400px;color:#333;">10</div>
<div class="b" style="left:542px;top:466.5px;width:11px;height:11px;border:1px solid #a4a4b0;box-sizing:border-box;background:linear-gradient(#e6e6ee,#fff)"><svg style="position:absolute;left:1px;top:0px" width="9" height="9" viewBox="0 0 9 9"><path d="M1.8 4.2 L3.8 7.5 L7.6 1" stroke="#4a4aa8" stroke-width="1.4" fill="none"/></svg></div>
<div class="t" style="left:309.72px;top:494.00px;font-size:11.250px;line-height:11.250px;color:#333;">Value Ausgabe</div>
<div class="t" style="left:410.79px;top:494.00px;font-size:10.811px;line-height:10.811px;color:#333;">16 MB</div>
<div class="b" style="left:467px;top:487.1px;width:53px;height:22.5px;background:#fff;border:1px solid #f0f0e8;border-top-color:#d4d4cc;border-left-color:#e0e0d8;box-sizing:border-box;"></div>
<div class="b" style="left:542px;top:493.1px;width:11px;height:11px;border:1px solid #a4a4b0;box-sizing:border-box;background:linear-gradient(#dcdce4,#fff)"></div>
<div class="t" style="left:309.72px;top:521.00px;font-size:11.250px;line-height:11.250px;color:#333;">Value Ausgabe</div>
<div class="t" style="left:411.33px;top:521.00px;font-size:11.000px;line-height:11.000px;color:#333;">4 MB</div>
<div class="b" style="left:467px;top:513.7px;width:53px;height:22.5px;background:#fff;border:1px solid #f0f0e8;border-top-color:#d4d4cc;border-left-color:#e0e0d8;box-sizing:border-box;"></div>
<div class="t" style="left:468.94px;top:521.00px;font-size:11.400px;line-height:11.400px;color:#333;">10</div>
<div class="b" style="left:542px;top:519.7px;width:11px;height:11px;border:1px solid #a4a4b0;box-sizing:border-box;background:linear-gradient(#e6e6ee,#fff)"><svg style="position:absolute;left:1px;top:0px" width="9" height="9" viewBox="0 0 9 9"><path d="M1.8 4.2 L3.8 7.5 L7.6 1" stroke="#4a4aa8" stroke-width="1.4" fill="none"/></svg></div>
<div class="t" style="left:309.72px;top:547.00px;font-size:11.250px;line-height:11.250px;color:#333;">Value Ausgabe</div>
<div class="t" style="left:411.04px;top:547.00px;font-size:11.124px;line-height:11.124px;color:#333;">8 MB</div>
<div class="b" style="left:467px;top:540.3px;width:53px;height:22.5px;background:#fff;border:1px solid #f0f0e8;border-top-color:#d4d4cc;border-left-color:#e0e0d8;box-sizing:border-box;"></div>
<div class="t" style="left:469.23px;top:547.00px;font-size:11.400px;line-height:11.400px;color:#333;">8</div>
<div class="b" style="left:542px;top:546.3px;width:11px;height:11px;border:1px solid #a4a4b0;box-sizing:border-box;background:linear-gradient(#e6e6ee,#fff)"><svg style="position:absolute;left:1px;top:0px" width="9" height="9" viewBox="0 0 9 9"><path d="M1.8 4.2 L3.8 7.5 L7.6 1" stroke="#4a4aa8" stroke-width="1.4" fill="none"/></svg></div>
<div class="b" style="left:445.8px;top:568.5px;width:67.49999999999994px;height:18.5px;background:#f4f4f4;border:1px solid #e0e0d8;border-radius:3px;box-sizing:border-box;"></div>
<div class="t" style="left:450.70px;top:575.00px;font-size:10.230px;line-height:10.230px;color:#444;">Aktualisieren</div>
<div class="b" style="left:518px;top:568.5px;width:56.5px;height:18.5px;background:#f4f4f4;border:1px solid #e0e0d8;border-radius:3px;box-sizing:border-box;"></div>
<div class="t" style="left:523.10px;top:575.00px;font-size:9.969px;line-height:9.969px;color:#444;">Abbrechen</div>
</body></html>
